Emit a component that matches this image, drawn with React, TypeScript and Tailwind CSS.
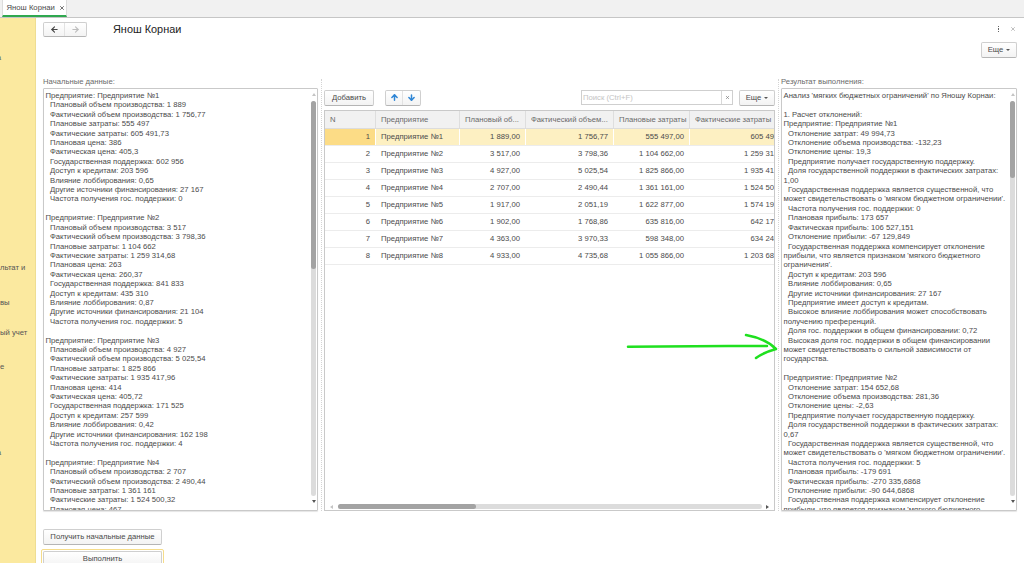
import { ArrowLeft, ArrowRight, ArrowUp, ArrowDown, X } from "lucide-react";

const initialText = [
  "Предприятие: Предприятие №1",
  "  Плановый объем производства: 1 889",
  "  Фактический объем производства: 1 756,77",
  "  Плановые затраты: 555 497",
  "  Фактические затраты: 605 491,73",
  "  Плановая цена: 386",
  "  Фактическая цена: 405,3",
  "  Государственная поддержка: 602 956",
  "  Доступ к кредитам: 203 596",
  "  Влияние лоббирования: 0,65",
  "  Другие источники финансирования: 27 167",
  "  Частота получения гос. поддержки: 0",
  "",
  "Предприятие: Предприятие №2",
  "  Плановый объем производства: 3 517",
  "  Фактический объем производства: 3 798,36",
  "  Плановые затраты: 1 104 662",
  "  Фактические затраты: 1 259 314,68",
  "  Плановая цена: 263",
  "  Фактическая цена: 260,37",
  "  Государственная поддержка: 841 833",
  "  Доступ к кредитам: 435 310",
  "  Влияние лоббирования: 0,87",
  "  Другие источники финансирования: 21 104",
  "  Частота получения гос. поддержки: 5",
  "",
  "Предприятие: Предприятие №3",
  "  Плановый объем производства: 4 927",
  "  Фактический объем производства: 5 025,54",
  "  Плановые затраты: 1 825 866",
  "  Фактические затраты: 1 935 417,96",
  "  Плановая цена: 414",
  "  Фактическая цена: 405,72",
  "  Государственная поддержка: 171 525",
  "  Доступ к кредитам: 257 599",
  "  Влияние лоббирования: 0,42",
  "  Другие источники финансирования: 162 198",
  "  Частота получения гос. поддержки: 4",
  "",
  "Предприятие: Предприятие №4",
  "  Плановый объем производства: 2 707",
  "  Фактический объем производства: 2 490,44",
  "  Плановые затраты: 1 361 161",
  "  Фактические затраты: 1 524 500,32",
  "  Плановая цена: 467",
];

const resultText = [
  "Анализ 'мягких бюджетных ограничений' по Яношу Корнаи:",
  "",
  "1. Расчет отклонений:",
  "Предприятие: Предприятие №1",
  "  Отклонение затрат: 49 994,73",
  "  Отклонение объема производства: -132,23",
  "  Отклонение цены: 19,3",
  "  Предприятие получает государственную поддержку.",
  "  Доля государственной поддержки в фактических затратах:",
  "1,00",
  "  Государственная поддержка является существенной, что",
  "может свидетельствовать о 'мягком бюджетном ограничении'.",
  "  Частота получения гос. поддержки: 0",
  "  Плановая прибыль: 173 657",
  "  Фактическая прибыль: 106 527,151",
  "  Отклонение прибыли: -67 129,849",
  "  Государственная поддержка компенсирует отклонение",
  "прибыли, что является признаком 'мягкого бюджетного",
  "ограничения'.",
  "  Доступ к кредитам: 203 596",
  "  Влияние лоббирования: 0,65",
  "  Другие источники финансирования: 27 167",
  "  Предприятие имеет доступ к кредитам.",
  "  Высокое влияние лоббирования может способствовать",
  "получению преференций.",
  "  Доля гос. поддержки в общем финансировании: 0,72",
  "  Высокая доля гос. поддержки в общем финансировании",
  "может свидетельствовать о сильной зависимости от",
  "государства.",
  "",
  "Предприятие: Предприятие №2",
  "  Отклонение затрат: 154 652,68",
  "  Отклонение объема производства: 281,36",
  "  Отклонение цены: -2,63",
  "  Предприятие получает государственную поддержку.",
  "  Доля государственной поддержки в фактических затратах:",
  "0,67",
  "  Государственная поддержка является существенной, что",
  "может свидетельствовать о 'мягком бюджетном ограничении'.",
  "  Частота получения гос. поддержки: 5",
  "  Плановая прибыль: -179 691",
  "  Фактическая прибыль: -270 335,6868",
  "  Отклонение прибыли: -90 644,6868",
  "  Государственная поддержка компенсирует отклонение",
  "прибыли, что является признаком 'мягкого бюджетного",
];

const rows = [
  ["1", "Предприятие №1", "1 889,00", "1 756,77", "555 497,00", "605 491,73"],
  ["2", "Предприятие №2", "3 517,00", "3 798,36", "1 104 662,00", "1 259 314,68"],
  ["3", "Предприятие №3", "4 927,00", "5 025,54", "1 825 866,00", "1 935 417,96"],
  ["4", "Предприятие №4", "2 707,00", "2 490,44", "1 361 161,00", "1 524 500,32"],
  ["5", "Предприятие №5", "1 917,00", "2 051,19", "1 622 877,00", "1 574 195,69"],
  ["6", "Предприятие №6", "1 902,00", "1 768,86", "635 816,00", "642 174,16"],
  ["7", "Предприятие №7", "4 363,00", "3 970,33", "598 348,00", "634 248,88"],
  ["8", "Предприятие №8", "4 933,00", "4 735,68", "1 055 866,00", "1 203 687,24"],
];

const colWidths = ["w-[51px]", "w-[84px]", "w-[66px]", "w-[88px]", "w-[76px]", "w-[105px]"];

const btn =
  "flex items-center justify-center whitespace-nowrap rounded-[2px] border border-[#cfcfcf] border-b-[#b5b5b5] bg-gradient-to-b from-white to-[#f3f3f3] text-[#4a4a4a]";

function Lines({ lines }: { lines: string[] }) {
  return (
    <div className="pl-[1.5px] pt-[2px] text-[7.7px] leading-[9.42px] text-[#4b4b4b]">
      {lines.map((l, i) => (
        <div key={i} className="h-[9.42px] whitespace-pre">
          {l.startsWith("  ") ? <span className="pl-[4.5px]">{l.trim()}</span> : l}
        </div>
      ))}
    </div>
  );
}

function TextPanel({ lines, thumbClass }: { lines: string[]; thumbClass: string }) {
  return (
    <div className="relative mt-[1px] h-[423px] overflow-hidden rounded-[1px] border border-[#c9c9c9] bg-white shadow-[0_1px_1px_#e5e5e5]">
      <Lines lines={lines} />
      {/* vertical scrollbar */}
      <div className="absolute bottom-[1px] right-[1px] top-[1px] flex w-[5px] flex-col items-center bg-white">
        <span className="mt-[3px] h-0 w-0 border-x-[2px] border-b-[3px] border-x-transparent border-b-[#c4c4c4]" />
        <div className="mt-[5px] h-[395px] w-[5px] rounded-full bg-[#dcdcdc]">
          <div className={`w-[5px] rounded-full bg-[#a3a3a3] ${thumbClass}`} />
        </div>
        <span className="mt-[4px] h-0 w-0 border-x-[2px] border-t-[3px] border-x-transparent border-t-[#555]" />
      </div>
    </div>
  );
}

function Splitter() {
  return (
    <div className="flex w-[6px] shrink-0 justify-center pt-[2px]">
      <div className="h-full border-l border-dotted border-[#d4d4d4]" />
    </div>
  );
}

export default function App() {
  return (
    <div className="relative flex h-[563px] w-[1024px] flex-col overflow-hidden bg-white font-['Liberation_Sans',Arial,sans-serif] text-[7.7px] text-[#4b4b4b]">
      {/* tab strip */}
      <div className="flex h-[18px] shrink-0 border-b border-[#c6c6c6] bg-[#f1f1f1] pl-[2px]">
        <div className="flex h-[17px] w-[65px] items-center gap-[4px] border-x border-[#dcdcdc] border-b-2 border-b-[#2fa84f] bg-white pl-[3.5px]">
          <span className="whitespace-nowrap">Янош Корнаи</span>
          <X className="h-[6px] w-[6px] shrink-0 text-[#444]" strokeWidth={3} />
        </div>
      </div>

      <div className="flex min-h-0 flex-1">
        {/* section panel, only the clipped tail of its labels is visible */}
        <div className="flex w-[36px] shrink-0 flex-col overflow-hidden border-r border-[#eedd93] bg-[#fbe99f] leading-[10px] text-[#555]">
          <div className="mt-[35px] flex h-[10px] w-[1px] justify-end whitespace-nowrap">а</div>
          <div className="mt-[200px] h-[10px] whitespace-nowrap">льтат и</div>
          <div className="mt-[25px] h-[10px] whitespace-nowrap">вы</div>
          <div className="mt-[20px] h-[10px] whitespace-nowrap">ый учет</div>
          <div className="mt-[24px] h-[10px] whitespace-nowrap">е</div>
          <div className="mt-[76px] flex h-[10px] w-[1px] justify-end whitespace-nowrap">а</div>
        </div>

        <div className="flex min-w-0 flex-1 flex-col pl-[7px] pr-[7px]">
          {/* header */}
          <div className="flex h-[59px] shrink-0">
            <div className={`${btn} mt-[4px] h-[15px] w-[44px] shrink-0`}>
              <div className="flex h-full w-[22px] items-center justify-center border-r border-[#e2e2e2]">
                <ArrowLeft className="h-[9px] w-[9px] text-[#444]" strokeWidth={3} />
              </div>
              <div className="flex h-full w-[22px] items-center justify-center">
                <ArrowRight className="h-[9px] w-[9px] text-[#bdbdbd]" strokeWidth={3} />
              </div>
            </div>
            <div className="ml-[26px] mt-[4px] text-[10.9px] leading-[15px] text-[#222]">Янош Корнаи</div>
            <div className="ml-auto flex flex-col items-end">
              <div className="mt-[6px] flex h-[10px] items-center gap-[11px]">
                <div className="flex flex-col gap-[1px]">
                  <span className="h-[1.5px] w-[1.5px] bg-[#666]" />
                  <span className="h-[1.5px] w-[1.5px] bg-[#666]" />
                  <span className="h-[1.5px] w-[1.5px] bg-[#666]" />
                </div>
                <X className="mr-[1px] h-[6px] w-[6px] text-[#999]" strokeWidth={2.5} />
              </div>
              <div className={`${btn} mt-[8px] h-[16px] w-[36px] gap-[3px]`}>
                Еще
                <span className="h-0 w-0 border-x-[2px] border-t-[2px] border-x-transparent border-t-[#555]" />
              </div>
            </div>
          </div>

          {/* three columns */}
          <div className="flex h-[434px] shrink-0">
            <div className="w-[275px] shrink-0">
              <div className="h-[10px] leading-[10px] text-[#6b6b6b]">Начальные данные:</div>
              <TextPanel lines={initialText} thumbClass="h-[168px]" />
            </div>
            <Splitter />
            <div className="flex w-[451px] shrink-0 flex-col pt-[12px]">
              <div className="flex h-[17px] shrink-0 items-center">
                <div className={`${btn} h-[16px] w-[50px]`}>Добавить</div>
                <div className={`${btn} ml-[11px] h-[16px] w-[36px]`}>
                  <div className="flex h-full w-[18px] items-center justify-center border-r border-[#e2e2e2]">
                    <ArrowUp className="h-[9px] w-[9px] text-[#2f86d6]" strokeWidth={4} />
                  </div>
                  <div className="flex h-full w-[18px] items-center justify-center">
                    <ArrowDown className="h-[9px] w-[9px] text-[#2f86d6]" strokeWidth={4} />
                  </div>
                </div>
                <div className="ml-auto flex h-[15px] w-[152px] items-center border border-[#cfcfcf] bg-white">
                  <span className="flex-1 pl-[1px] text-[#c4c4c4]">Поиск (Ctrl+F)</span>
                  <span className="flex h-full w-[11px] items-center justify-center border-l border-[#d8d8d8]">
                    <X className="h-[5px] w-[5px] text-[#777]" strokeWidth={3} />
                  </span>
                </div>
                <div className={`${btn} ml-[6px] h-[16px] w-[36px] gap-[3px]`}>
                  Еще
                  <span className="h-0 w-0 border-x-[2px] border-t-[2px] border-x-transparent border-t-[#555]" />
                </div>
              </div>

              {/* table */}
              <div className="relative mt-[4px] h-[401px] overflow-hidden border border-[#c9c9c9] bg-white">
                <div className="flex h-[18px] w-max border-b border-[#dcdcdc] bg-[#f1f1f1] text-[#6a6a6a]">
                  {["N", "Предприятие", "Плановый об...", "Фактический объем...", "Плановые затраты", "Фактические затраты"].map(
                    (h, i) => (
                      <div
                        key={h}
                        className={`${colWidths[i]} flex items-center whitespace-nowrap border-r border-[#dedede] pl-[5px]`}
                      >
                        {h}
                      </div>
                    ),
                  )}
                </div>
                {rows.map((r, ri) => (
                  <div key={r[0]} className="flex h-[17px] w-max border-b border-[#ececec]">
                    {r.map((c, i) => (
                      <div
                        key={i}
                        className={`${colWidths[i]} flex items-center whitespace-nowrap border-r ${
                          ri === 0
                            ? i === 0
                              ? "border-white bg-[#fcdc86]"
                              : "border-white bg-[#fdf0c2]"
                            : "border-transparent"
                        } ${i === 1 ? "pl-[5px]" : "justify-end pr-[5px]"}`}
                      >
                        {c}
                      </div>
                    ))}
                  </div>
                ))}
                {/* horizontal scrollbar */}
                <div className="absolute bottom-[1px] left-[5px] right-[5px] flex h-[5px] items-center">
                  <span className="h-0 w-0 border-y-[2px] border-r-[3px] border-y-transparent border-r-[#c4c4c4]" />
                  <div className="ml-[5px] h-[5px] w-[424px] rounded-full bg-[#dcdcdc]">
                    <div className="h-[5px] w-[138px] rounded-full bg-[#a3a3a3]" />
                  </div>
                  <span className="ml-auto h-0 w-0 border-y-[2px] border-l-[3px] border-y-transparent border-l-[#555]" />
                </div>
              </div>
            </div>
            <Splitter />
            <div className="w-[236px] shrink-0">
              <div className="h-[10px] leading-[10px] text-[#6b6b6b]">Результат выполнения:</div>
              <TextPanel lines={resultText} thumbClass="h-[77px]" />
            </div>
          </div>

          {/* bottom buttons */}
          <div className={`${btn} mt-[18px] h-[16px] w-[119px] shrink-0`}>Получить начальные данные</div>
          <div className="-ml-[2px] mt-[4px] w-[123px] shrink-0 rounded-[2px] border border-[#f5dc8a] p-[1px]">
            <div className={`${btn} h-[16px] w-full`}>Выполнить</div>
          </div>
        </div>
      </div>

      {/* hand-drawn green arrow over the page */}
      <svg className="pointer-events-none absolute left-0 top-0" width="1024" height="563" fill="none">
        <path
          d="M628 346.8 C670 346.5 720 346 767 346 M746 335 C757 337 768 341 776 349 C769 351 761 354 756 358"
          stroke="#1fe01f"
          strokeWidth="2.5"
          strokeLinecap="round"
          strokeLinejoin="round"
        />
      </svg>
    </div>
  );
}
